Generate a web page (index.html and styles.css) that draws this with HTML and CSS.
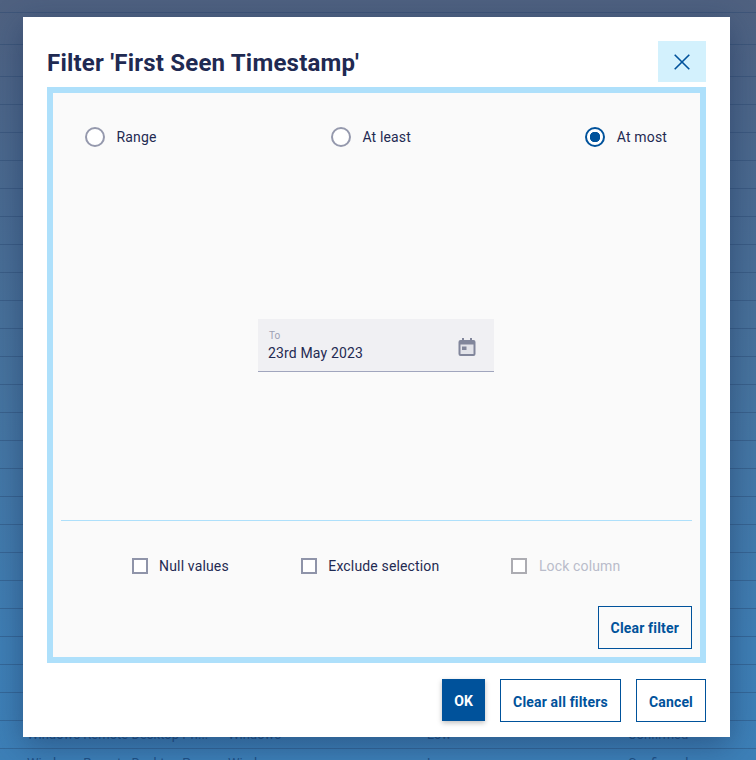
FILE: index.html
```html
<!DOCTYPE html>
<html lang="en">
<head>
<meta charset="utf-8">
<title>Filter</title>
<link rel="stylesheet" href="styles.css">
</head>
<body>
<div class="table">
  <div class="row top"></div><div class="row head-row"></div><div class="row head-row"></div>
  <div class="row"></div><div class="row"></div><div class="row"></div><div class="row"></div>
  <div class="row"></div><div class="row"></div><div class="row"></div><div class="row"></div>
  <div class="row"></div><div class="row"></div><div class="row"></div><div class="row"></div>
  <div class="row"></div><div class="row"></div><div class="row"></div><div class="row"></div>
  <div class="row"></div><div class="row"></div><div class="row"></div><div class="row"></div>
  <div class="row"></div><div class="row"></div><div class="row"></div>
  <div class="row"><span class="c1">Windows Remote Desktop Pri...</span><span class="c2">Windows</span><span class="c3">Low</span><span class="c4">Confirmed</span></div>
  <div class="row"><span class="c1">Windows Remote Desktop Pr...</span><span class="c2">Windows</span><span class="c3">Low</span><span class="c4">Confirmed</span></div>
</div>
<div class="modal">
  <header class="head">
    <h1 class="title">Filter 'First Seen Timestamp'</h1>
    <button class="close" aria-label="Close">
      <svg width="16" height="16" viewBox="0 0 16 16"><path d="M.7 .7 L15.300 15.300 M15.300 .7 L.7 15.300" fill="none" stroke="#00529b" stroke-width="1.600"/></svg>
    </button>
  </header>
  <section class="panel">
    <div class="radios">
      <label class="opt"><span class="radio"></span>Range</label>
      <label class="opt"><span class="radio"></span>At least</label>
      <label class="opt"><span class="radio on"></span>At most</label>
    </div>
    <div class="middle">
      <div class="date">
        <div class="date-text">
          <span class="date-label">To</span>
          <span class="date-value">23rd May 2023</span>
        </div>
        <svg class="cal" width="18" height="18" viewBox="0 0 18 18"><path fill="#e2e3e9" d="M2 5h14v11H2z"/><path fill="#81869b" d="M4 0h2v2h6V0h2v2h1.500A2 2 0 0 1 17.500 4v12a2 2 0 0 1-2 2h-13a2 2 0 0 1-2-2V4a2 2 0 0 1 2-2H4zM2.500 6.500V16h13V6.500z"/><rect x="4" y="8.500" width="4.500" height="3.500" fill="#81869b"/></svg>
      </div>
    </div>
    <div class="checks">
      <label class="opt"><span class="box"></span>Null values</label>
      <label class="opt"><span class="box"></span>Exclude selection</label>
      <label class="opt off"><span class="box"></span>Lock column</label>
    </div>
    <div class="clear-row"><button class="btn">Clear filter</button></div>
  </section>
  <footer class="foot">
    <button class="btn primary">OK</button>
    <button class="btn">Clear all filters</button>
    <button class="btn">Cancel</button>
  </footer>
</div>
</body>
</html>
```
FILE: styles.css
```css
* { box-sizing: border-box; }
html, body { margin: 0; height: 760px; overflow: hidden; }
body {
  position: relative;
  width: 756px;
  font-family: Roboto, "Liberation Sans", sans-serif;
  color: #1f2a52;
  background: linear-gradient(180deg, #4f6180 0%, #4a6a90 25%, #47749f 50%, #3f7fb5 85%, #3d80b8 100%);
}
.row {
  position: relative;
  height: 28px;
  border-bottom: 1px solid rgba(40, 70, 110, 0.4);
  font-size: 13px;
  line-height: 16px;
  color: #1f5186;
}
.row.top { height: 13px; }
.row.head-row { height: 32px; }
.row span { position: absolute; top: 6px; }
.c1 { left: 27px; }
.c2 { left: 228px; }
.c3 { left: 427px; }
.c4 { left: 628px; }
.modal {
  position: absolute;
  left: 23px;
  top: 17px;
  width: 707px;
  height: 720px;
  background: #fff;
  padding: 24px 24px 15px;
  display: flex;
  flex-direction: column;
  box-shadow: 0 8px 30px rgba(20, 40, 80, 0.45);
}
.head { display: flex; justify-content: space-between; align-items: flex-start; height: 46px; }
.title { margin: 8px 0 0; font-size: 24px; line-height: 28px; font-weight: 700; letter-spacing: 0.21px; color: #1f2a52; }
.close { width: 48px; height: 41px; border: 0; padding: 0; background: #d3f1fd; display: flex; align-items: center; justify-content: center; }
.panel {
  height: 576px;
  border: 6px solid #aee0fb;
  background: #fafafa;
  display: flex;
  flex-direction: column;
  padding: 0 8px 8px;
}
.radios { display: flex; justify-content: space-between; padding: 34px 25px 0 24px; }
.opt { display: flex; align-items: center; gap: 11.500px; font-size: 14px; line-height: 20px; letter-spacing: 0.15px; color: #1f2a52; }
.radio { width: 20px; height: 20px; border: 2px solid #9599ad; border-radius: 50%; background: #fff; }
.radio.on { border-color: #00529b; background: radial-gradient(circle, #00529b 0 5px, #fff 5.500px); }
.middle { flex: 1; display: flex; align-items: center; justify-content: center; padding: 23px 1px 0 0; border-bottom: 1px solid #aee0fb; }
.date { width: 236px; height: 53px; background: #f0f0f3; border-bottom: 1px solid #a0a5bd; display: flex; align-items: center; justify-content: space-between; padding: 3px 18px 0 10px; }
.date-text { display: flex; flex-direction: column; }
.date-label { font-size: 10px; line-height: 12px; color: #9da1b4; margin-left: 1px; }
.date-value { font-size: 14px; line-height: 20px; letter-spacing: 0.15px; color: #1f2a52; margin-top: 1px; }
.cal { margin-top: 1px; }
.checks { display: flex; justify-content: center; gap: 72px; height: 85px; padding: 35px 1px 0 0; }
.checks .opt { height: 20px; }
.box { width: 16px; height: 16px; border: 2px solid #8f94a9; background: #fff; }
.off { color: #b9bcca; }
.off .box { border-color: #acacb2; }
.clear-row { display: flex; justify-content: flex-end; }
.btn { height: 43px; padding: 2px 12px 0; background: #fff; border: 1px solid #00529b; color: #00529b; font: 700 14px Roboto, sans-serif; letter-spacing: 0.17px; }
.clear-row .btn { background: #fafafa; padding-top: 0; }
.foot { display: flex; justify-content: flex-end; align-items: flex-start; gap: 15px; margin-top: 16px; }
.btn.primary { height: 42px; padding: 1px 11px 0; background: #00529b; color: #fff; box-shadow: 0 2px 5px rgba(0, 0, 0, 0.25); }
```
